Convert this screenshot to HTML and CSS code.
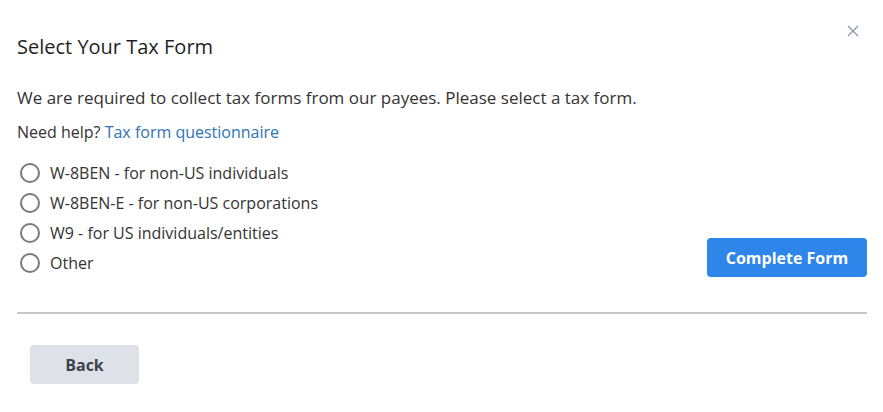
FILE: index.html
```html
<!DOCTYPE html>
<html>
<head>
<meta charset="utf-8">
<link rel="stylesheet" href="styles.css">
</head>
<body>
<div class="modal">
  <button class="close" aria-label="Close">
    <svg width="12" height="12" viewBox="0 0 12 12"><path d="M1 1L11 11M11 1L1 11" stroke="#8d9db1" stroke-width="1.4" fill="none"/></svg>
  </button>
  <h1 class="title">Select Your Tax Form</h1>
  <p class="text intro">We are required to collect tax forms from our payees. Please select a tax form.</p>
  <p class="text help">Need help? <a class="link" href="#">Tax form questionnaire</a></p>
  <div class="row">
    <div class="options">
      <label class="option"><span class="radio"></span>W-8BEN - for non-US individuals</label>
      <label class="option"><span class="radio"></span>W-8BEN-E - for non-US corporations</label>
      <label class="option"><span class="radio"></span>W9 - for US individuals/entities</label>
      <label class="option"><span class="radio"></span>Other</label>
    </div>
    <button class="btn primary">Complete Form</button>
  </div>
  <hr class="divider">
  <div class="footer">
    <button class="btn secondary">Back</button>
  </div>
</div>
</body>
</html>
```
FILE: styles.css
```css
* { box-sizing: border-box; }
html, body { margin: 0; padding: 0; background: #fff; }
body {
  font-family: "Open Sans", "Noto Sans", sans-serif;
  color: #222;
  width: 883px;
  height: 412px;
  overflow: hidden;
}
.modal {
  position: relative;
  padding: 34px 16px 0 17px;
}
.close {
  position: absolute;
  top: 25px;
  right: 24px;
  width: 12px;
  height: 12px;
  padding: 0;
  border: 0;
  background: none;
  display: flex;
}
.title {
  margin: 0;
  font-size: 20px;
  line-height: 26px;
  font-weight: 400;
  color: #1f1f1f;
}
.text {
  margin: 0;
  font-size: 16px;
  line-height: 24px;
  color: #333;
}
.intro { margin-top: 26px; font-size: 17px; }
.help { margin-top: 10px; }
.link { color: #2f73b8; text-decoration: none; }
.row {
  display: flex;
  justify-content: space-between;
  align-items: flex-end;
  margin-top: 14px;
}
.options { display: flex; flex-direction: column; }
.option {
  display: flex;
  align-items: center;
  height: 30px;
  font-size: 16px;
  color: #333;
  padding-left: 3px;
}
.radio {
  width: 20px;
  height: 20px;
  border: 2px solid #7a7a7a;
  border-radius: 50%;
  margin-right: 10px;
  flex: none;
}
.btn {
  font-family: "Open Sans", "Noto Sans", sans-serif;
  font-weight: 700;
  font-size: 16px;
  border: 0;
  border-radius: 4px;
  height: 39px;
  padding: 0;
}
.primary {
  width: 160px;
  background: #2e86ea;
  color: #fff;
  margin-bottom: 1px;
}
.divider {
  margin: 34px 0 0;
  border: 0;
  height: 2px;
  background: #c8c8c8;
}
.footer { padding: 31px 0 0 13px; }
.secondary {
  width: 109px;
  background: #dee2e8;
  color: #3d4250;
}
```
